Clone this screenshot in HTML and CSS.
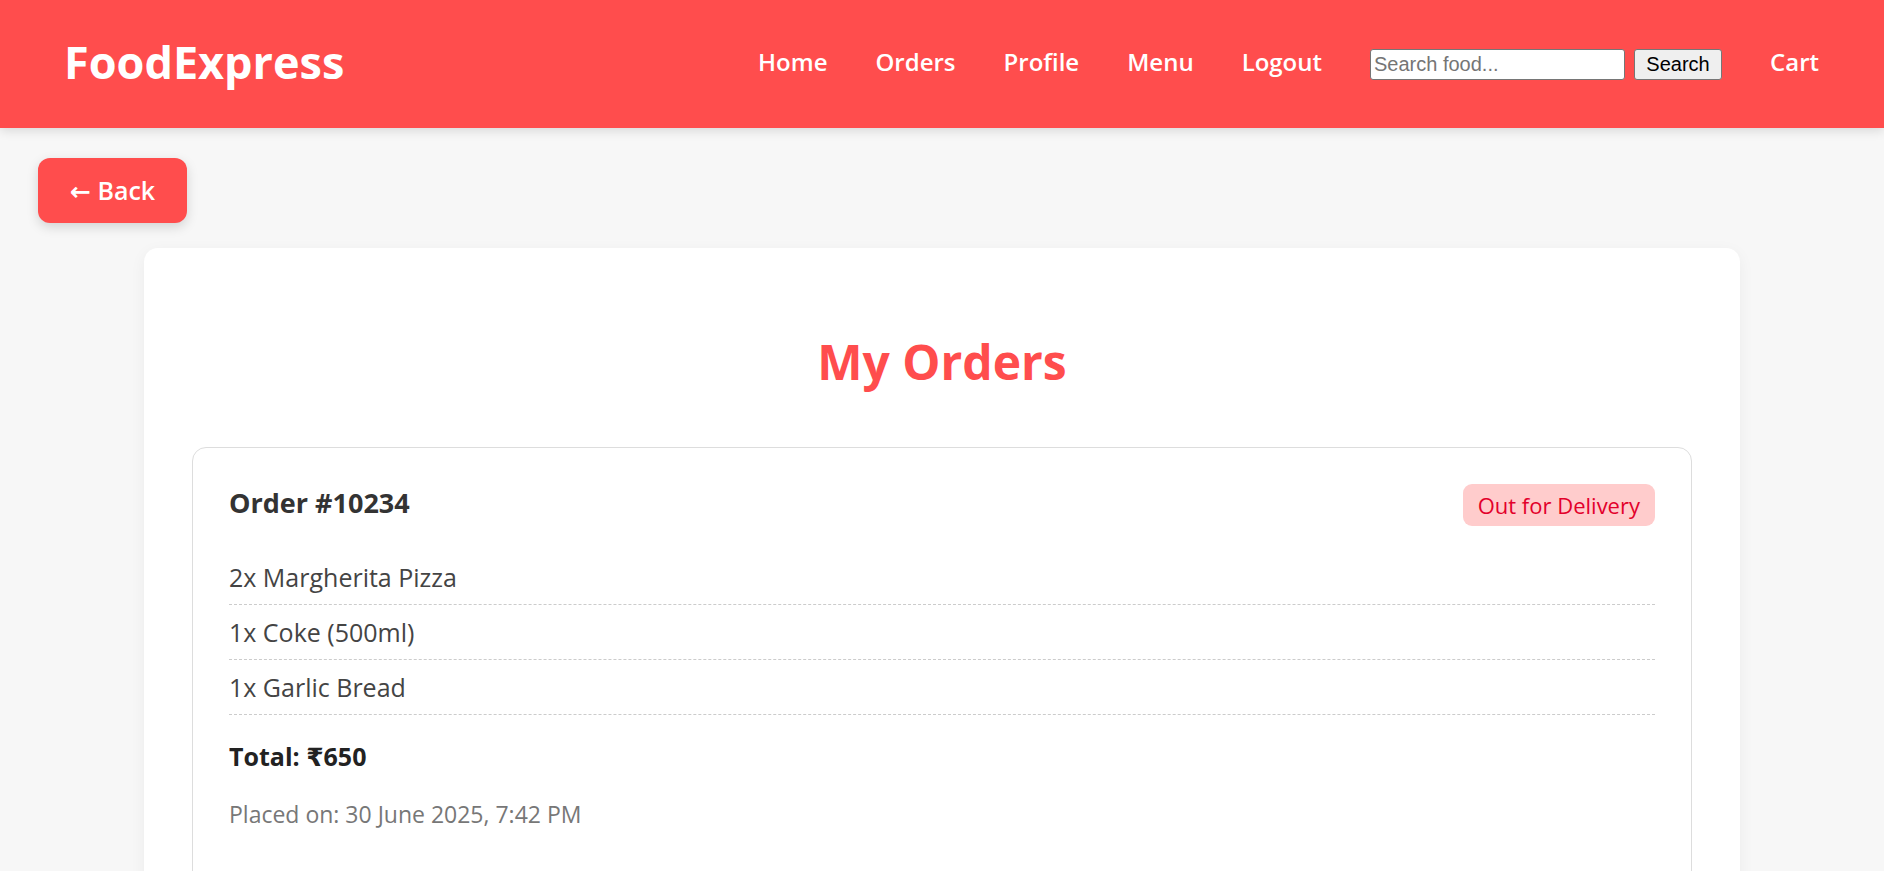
FILE: index.html
```html
<!DOCTYPE html>
<html lang="en">
<head>
    <meta charset="UTF-8">
    <title>My Orders - FoodExpress</title>
    <link rel="stylesheet" href="styles.css">
</head>
<body>

    <header class="topbar">
        <div class="logo">FoodExpress</div>
        <nav class="nav">
            <a href="#">Home</a>
            <a href="#">Orders</a>
            <a href="#">Profile</a>
            <a href="#">Menu</a>
            <a href="#">Logout</a>
            <form class="search">
                <input type="text" placeholder="Search food...">
                <button type="button">Search</button>
            </form>
            <a href="#">Cart</a>
        </nav>
    </header>

    <a href="#" class="back_btn">&larr; Back</a>

    <div class="orders_box">
        <h2 class="title">My Orders</h2>

        <div class="order_card">
            <div class="order_head">
                <span class="order_id">Order #10234</span>
                <span class="status">Out for Delivery</span>
            </div>
            <ul class="items">
                <li>2x Margherita Pizza</li>
                <li>1x Coke (500ml)</li>
                <li>1x Garlic Bread</li>
            </ul>
            <p class="total">Total: ₹650</p>
            <p class="date">Placed on: 30 June 2025, 7:42 PM</p>
        </div>
    </div>

</body>
</html>
```

FILE: styles.css
```css
* {
    box-sizing: border-box;
}
body {
    margin: 0;
    background-color: #f7f7f7;
    font-family: "Open Sans", "DejaVu Sans", sans-serif;
    color: #333;
}
a {
    text-decoration: none;
}
ul {
    list-style: none;
    margin: 0;
    padding: 0;
}

/* 顶部导航 */
.topbar {
    height: 128px;
    padding: 0 65px 0 64px;
    background-color: #ff4d4d;
    display: flex;
    justify-content: space-between;
    align-items: center;
    box-shadow: 0 3px 10px rgba(0, 0, 0, 0.12);
}
.logo {
    color: #fff;
    font-size: 45px;
    font-weight: 700;
    margin-top: -6px;
}
.nav {
    display: flex;
    align-items: center;
    gap: 48px;
}
.nav a {
    color: #fff;
    font-size: 24px;
    font-weight: 600;
    margin-top: -5px;
}
.search {
    display: flex;
    gap: 9px;
    margin: 0;
}
.search input {
    width: 255px;
    height: 31px;
    padding: 1px 3px;
    border: 1px solid #767676;
    border-radius: 3px;
    font-family: "Liberation Sans", Arial, sans-serif;
    font-size: 20px;
    background: #fff;
}
.search input::placeholder {
    color: #757575;
}
.search button {
    width: 88px;
    height: 31px;
    padding: 0;
    border: 1px solid #767676;
    border-radius: 3px;
    background-color: #efefef;
    font-family: "Liberation Sans", Arial, sans-serif;
    font-size: 20px;
    color: #000;
}

/* 返回按钮 */
.back_btn {
    display: inline-block;
    margin: 30px 0 0 38px;
    height: 65px;
    padding: 14px 32px;
    line-height: 36px;
    font-size: 25px;
    font-weight: 600;
    color: #fff;
    background-color: #ff4d4d;
    border-radius: 12px;
    box-shadow: 0 4px 12px rgba(0, 0, 0, 0.15);
}

/* 订单区域 */
.orders_box {
    margin: 25px 144px 0;
    padding: 48px;
    background-color: #fff;
    border-radius: 14px;
    box-shadow: 0 4px 16px rgba(0, 0, 0, 0.05);
}
.title {
    margin: 37px 0 56px;
    text-align: center;
    font-size: 48px;
    line-height: 1.2;
    font-weight: 700;
    color: #ff4d4d;
}
.order_card {
    border: 1px solid #ddd;
    border-radius: 14px;
    padding: 36px 36px 72px;
}
.order_head {
    display: flex;
    justify-content: space-between;
    align-items: center;
    margin-bottom: 24px;
}
.order_id {
    font-size: 27px;
    font-weight: 700;
    color: #333;
    margin-top: -4px;
}
.status {
    padding: 7px 15px;
    line-height: 28px;
    font-size: 22px;
    color: #e3002b;
    background-color: #ffcccc;
    border-radius: 9px;
}
.items li {
    padding: 9px 0;
    line-height: 36px;
    font-size: 25px;
    color: #444;
    border-bottom: 1px dashed #ccc;
}
.total {
    margin: 23px 0 0;
    line-height: 36px;
    font-size: 25px;
    font-weight: 700;
    color: #222;
}
.date {
    margin: 23px 0 0;
    line-height: 1.5;
    font-size: 23px;
    color: #777;
}
```
